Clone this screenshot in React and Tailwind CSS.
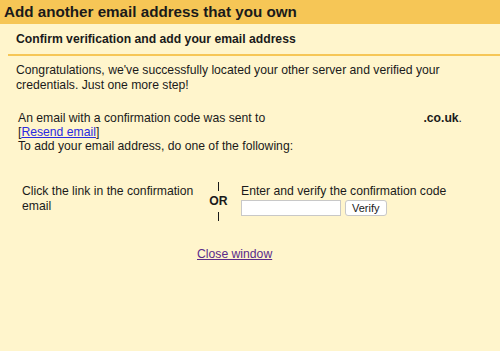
export default function App() {
  return (
    <div
      className="w-[500px] h-[351px] bg-[#fff5cc] text-[#1a1a1a] overflow-hidden"
      style={{ fontFamily: '"Liberation Sans", Arial, sans-serif' }}
    >
      <div className="h-[24px] bg-[#f6c656] px-[4px] flex items-center">
        <h1 className="text-[15.2px] font-bold leading-none">Add another email address that you own</h1>
      </div>

      <div className="ml-[8px] border-b-2 border-[#f6c656] pl-[8px] pt-[8px] pb-[7px]">
        <h2 className="text-[12.2px] font-bold leading-[15px]">Confirm verification and add your email address</h2>
      </div>

      <div className="px-[16px] pt-[7px] text-[12.2px] leading-[15px]">
        <p>
          Congratulations, we've successfully located your other server and verified your credentials. Just one more
          step!
        </p>

        <div className="mt-[18px] pl-[2px] leading-[14px]">
          <div className="flex">
            <span>An email with a confirmation code was sent to</span>
            <span className="ml-auto mr-[22px]">
              <b>.co.uk</b>.
            </span>
          </div>
          <div>
            [<a href="#" className="text-[#2a2ae0] underline">Resend email</a>]
          </div>
          <div>To add your email address, do one of the following:</div>
        </div>

        <div className="mt-[29px] pl-[6px] flex items-start">
          <div className="w-[174px] pt-[2px] leading-[15px]">Click the link in the confirmation email</div>
          <div className="w-[45px] flex flex-col items-center font-bold leading-[15px]">
            <span className="w-[1.5px] h-[9px] bg-[#1a1a1a]" />
            <span className="py-[3px]">OR</span>
            <span className="w-[1.5px] h-[9px] bg-[#1a1a1a]" />
          </div>
          <div className="pt-[2px]">
            <div className="leading-[15px]">Enter and verify the confirmation code</div>
            <div className="flex items-center gap-[4px] mt-[1px]">
              <input className="w-[100px] h-[16px] bg-white border border-[#c8c8c8] outline-none" />
              <button className="h-[16px] px-[6px] bg-white border border-[#c8c8c8] rounded-[3px] text-[11px] leading-none">
                Verify
              </button>
            </div>
          </div>
        </div>

        <div className="mt-[26px] pl-[181px]">
          <a href="#" className="text-[#5a2a8a] underline">Close window</a>
        </div>
      </div>
    </div>
  );
}
